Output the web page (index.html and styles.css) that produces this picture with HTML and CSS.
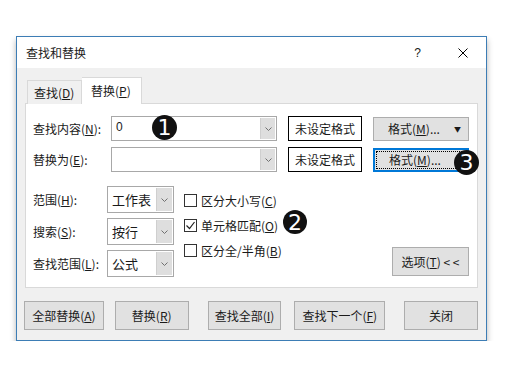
FILE: index.html
```html
<!DOCTYPE html>
<html lang="zh-CN">
  <head>
    <meta charset="UTF-8" />
    <title>查找和替换</title>
    <link rel="stylesheet" href="styles.css">
  </head>
  <body>
    <div class="dialog">
      <div class="titlebar">
        <span class="title">查找和替换</span>
        <span class="help">?</span>
        <svg class="close" viewBox="0 0 10 10" width="10" height="10">
          <path d="M0.5 0.5 L9.5 9.5 M9.5 0.5 L0.5 9.5" stroke="#000" stroke-width="1" fill="none"/>
        </svg>
      </div>
      <div class="dialog-body">
        <div class="tabs">
          <div class="tab">查找(<u>D</u>)</div>
          <div class="tab active">替换(<u>P</u>)</div>
        </div>
        <div class="panel">
          <div class="row">
            <div class="label">查找内容(<u>N</u>):</div>
            <div class="combo">
              <span class="combo-text">0</span>
              <span class="arrow"><svg viewBox="0 0 7 4" width="7" height="4"><path d="M0.5 0.5 L3.5 3.5 L6.5 0.5" stroke="#707070" fill="none"/></svg></span>
            </div>
            <div class="preview">未设定格式</div>
            <button class="btn fmt">格式(<u>M</u>)... <span class="caret">▼</span></button>
          </div>
          <div class="row second">
            <div class="label">替换为(<u>E</u>):</div>
            <div class="combo">
              <span class="combo-text"></span>
              <span class="arrow"><svg viewBox="0 0 7 4" width="7" height="4"><path d="M0.5 0.5 L3.5 3.5 L6.5 0.5" stroke="#707070" fill="none"/></svg></span>
            </div>
            <div class="preview">未设定格式</div>
            <button class="btn fmt focused"><span class="focus-ring">格式(<u>M</u>)...</span></button>
          </div>
          <div class="lower">
            <div class="fields">
              <div class="label">范围(<u>H</u>):</div>
              <div class="select">
                <span class="select-text">工作表</span>
                <span class="arrow"><svg viewBox="0 0 7 4" width="7" height="4"><path d="M0.5 0.5 L3.5 3.5 L6.5 0.5" stroke="#707070" fill="none"/></svg></span>
              </div>
              <div class="label">搜索(<u>S</u>):</div>
              <div class="select">
                <span class="select-text">按行</span>
                <span class="arrow"><svg viewBox="0 0 7 4" width="7" height="4"><path d="M0.5 0.5 L3.5 3.5 L6.5 0.5" stroke="#707070" fill="none"/></svg></span>
              </div>
              <div class="label">查找范围(<u>L</u>):</div>
              <div class="select">
                <span class="select-text">公式</span>
                <span class="arrow"><svg viewBox="0 0 7 4" width="7" height="4"><path d="M0.5 0.5 L3.5 3.5 L6.5 0.5" stroke="#707070" fill="none"/></svg></span>
              </div>
            </div>
            <div class="checks">
              <div class="check"><span class="box"></span>区分大小写(<u>C</u>)</div>
              <div class="check">
                <span class="box"><svg viewBox="0 0 11 11" width="11" height="11"><path d="M1.5 5.5 L4.5 8.5 L9.5 2" stroke="#222" stroke-width="1.2" fill="none"/></svg></span>单元格匹配(<u>O</u>)
              </div>
              <div class="check"><span class="box"></span>区分全/半角(<u>B</u>)</div>
            </div>
            <button class="btn options-btn">选项(<u>T</u>) &lt; &lt;</button>
          </div>
        </div>
        <div class="footer">
          <button class="btn foot all">全部替换(<u>A</u>)</button>
          <button class="btn foot replace">替换(<u>R</u>)</button>
          <button class="btn foot findall">查找全部(<u>I</u>)</button>
          <button class="btn foot next">查找下一个(<u>F</u>)</button>
          <button class="btn foot close-btn">关闭</button>
        </div>
      </div>

      <div class="badge b1">1</div>
      <div class="badge b2">2</div>
      <div class="badge b3">3</div>
    </div>
  </body>
</html>
```

FILE: styles.css
```css
body {
  margin: 0;
  background-color: #ffffff;
  font-family: "Noto Sans CJK SC", "Liberation Sans", sans-serif;
  font-size: 12px;
  color: #1a1a1a;
}

u {
  text-underline-offset: 1px;
}

.dialog {
  position: relative;
  width: 471px;
  margin: 36px 0 0 16px;
  border: 1px solid #3d7db5;
  background-color: #f0f0f0;
  box-sizing: border-box;
  box-shadow: 0 4px 6px rgba(0, 0, 0, 0.3);
}

.titlebar {
  display: flex;
  align-items: center;
  height: 31px;
  padding-left: 9px;
  background-color: #ffffff;
}

.title {
  flex: 1;
}

.help {
  font-family: "Liberation Sans", sans-serif;
  font-size: 12px;
  margin-right: 37px;
}

.close {
  margin-right: 18px;
}

.dialog-body {
  padding: 0 8px 10px 8px;
}

.tabs {
  display: flex;
  align-items: flex-end;
  height: 36px;
  padding-left: 2px;
  margin-bottom: -1px;
}

.tab {
  height: 24px;
  padding: 0 6px;
  line-height: 24px;
  border: 1px solid #d9d9d9;
  border-bottom: none;
  background-color: #f0f0f0;
  box-sizing: border-box;
  width: 55px;
}

.tab.active {
  height: 27px;
  width: 60px;
  padding-left: 9px;
  line-height: 26px;
  background-color: #ffffff;
  border-left: none;
  position: relative;
  z-index: 1;
}

.panel {
  background-color: #ffffff;
  border: 1px solid #d9d9d9;
  padding: 12px 8px 10px 7px;
}

.row {
  display: flex;
  align-items: center;
  height: 25px;
}

.row.second {
  margin-top: 6px;
}

.label {
  width: 78px;
  white-space: nowrap;
}

.combo {
  display: flex;
  width: 166px;
  height: 25px;
  border: 1px solid #a8a8a8;
  box-sizing: border-box;
}

.combo-text {
  flex: 1;
  padding-left: 4px;
  line-height: 21px;
  font-family: "Liberation Sans", sans-serif;
}

.arrow {
  display: flex;
  align-items: center;
  justify-content: center;
  width: 14px;
  margin: 1px;
  background-color: #dedede;
  border-left: 1px solid #cfcfcf;
}

.preview {
  width: 74px;
  height: 25px;
  margin-left: 11px;
  border: 1px solid #000000;
  box-sizing: border-box;
  text-align: center;
  line-height: 23px;
}

.btn {
  font-family: inherit;
  font-size: 12px;
  color: #1a1a1a;
  background-color: #e1e1e1;
  border: 1px solid #adadad;
  padding: 0;
  box-sizing: border-box;
}

.fmt {
  position: relative;
  width: 96px;
  height: 24px;
  margin-left: 11px;
  padding-right: 14px;
}

.caret {
  position: absolute;
  right: 7px;
  top: 6px;
  font-size: 7px;
}

.fmt.focused {
  border: 1px solid #0078d7;
  box-shadow: inset 0 0 0 1px #0078d7;
  padding: 2px;
}

.focus-ring {
  display: block;
  height: 100%;
  border: 1px dotted #000000;
  box-sizing: border-box;
  line-height: 16px;
  padding-right: 12px;
}

.lower {
  display: flex;
  margin-top: 14px;
}

.fields {
  display: grid;
  grid-template-columns: 74px 67px;
  grid-auto-rows: 27px;
  row-gap: 5px;
  align-items: center;
}

.select {
  display: flex;
  height: 27px;
  border: 1px solid #a8a8a8;
  box-sizing: border-box;
}

.select-text {
  flex: 1;
  padding-left: 4px;
  line-height: 25px;
  font-size: 13px;
}

.select .arrow {
  width: 15px;
}

.checks {
  margin-left: 10px;
  margin-top: 2px;
}

.check {
  display: flex;
  align-items: center;
  height: 25px;
}

.box {
  display: flex;
  align-items: center;
  justify-content: center;
  width: 13px;
  height: 13px;
  margin-right: 4px;
  border: 1px solid #333333;
  box-sizing: border-box;
  background-color: #ffffff;
}

.options-btn {
  align-self: flex-end;
  width: 77px;
  height: 29px;
  margin-left: auto;
  margin-bottom: 1px;
}

.footer {
  display: flex;
  margin-top: 13px;
}

.foot {
  height: 29px;
  width: 74px;
}

.foot.all {
  width: 80px;
  margin-left: -1px;
}

.foot.replace {
  margin-left: 11px;
}

.foot.findall {
  margin-left: 19px;
}

.foot.next {
  width: 91px;
  margin-left: 13px;
}

.foot.close-btn {
  margin-left: 19px;
}

.badge {
  position: absolute;
  width: 25px;
  height: 25px;
  border-radius: 50%;
  background-color: #111111;
  color: #ffffff;
  font-family: "DejaVu Sans", sans-serif;
  font-size: 22px;
  line-height: 26px;
  text-align: center;
}

.b1 {
  left: 135px;
  top: 78px;
}

.b2 {
  left: 266px;
  top: 173px;
  width: 24px;
  height: 24px;
  line-height: 25px;
}

.b3 {
  left: 437px;
  top: 113px;
}
```
